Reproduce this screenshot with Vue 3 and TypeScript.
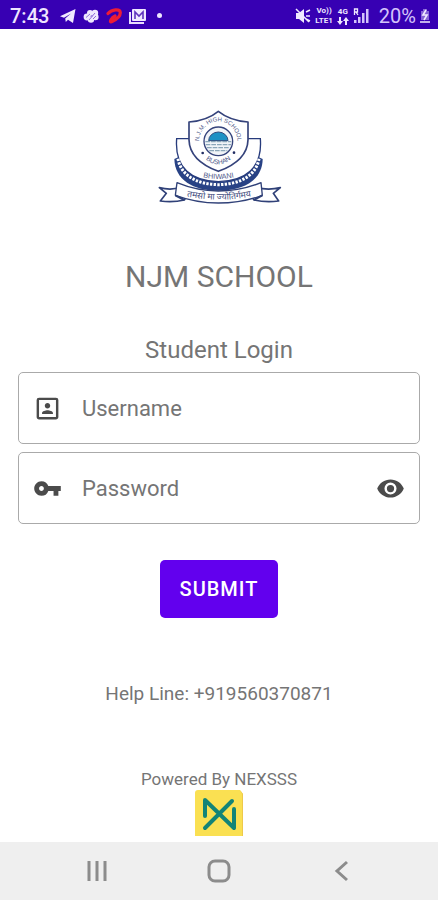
<script setup lang="ts">
import { ref } from 'vue'

const username = ref('')
const password = ref('')
const passwordVisible = ref(false)
</script>

<template>
  <div class="screen">
    <header class="status">
      <div class="status-left">
        <time class="clock">7:43</time>
        <svg class="glyph" viewBox="0 0 16 16" aria-hidden="true"><path fill="#f1eaff" d="M0 8.2 15.5 1 13 15 8 11.7 5.8 14 5.2 10.6 11 5.4 4 9.8z" /></svg>
        <svg class="glyph" viewBox="0 0 16 16" aria-hidden="true">
          <g fill="#efe7ff"><circle cx="4" cy="9" r="3.4" /><circle cx="7" cy="5" r="3" /><circle cx="12" cy="5" r="3.2" /><circle cx="12.4" cy="9" r="3.2" /><circle cx="8" cy="11.5" r="3.2" /></g>
          <path d="M3 9.500 7 6M6 12l6-7M10 11l3-3" stroke="#8f6cdb" fill="none" />
        </svg>
        <svg class="glyph" viewBox="0 0 16 16" aria-hidden="true"><path fill="none" stroke="#ee1c35" stroke-width="3.2" stroke-linecap="round" d="M2 5.500C6 1 14 .5 14.300 4.500C14.500 9 8.500 12.500 5.500 13.800C3 14.500 5.500 9.500 9 8" /></svg>
        <svg class="glyph wide" viewBox="0 0 18 16" aria-hidden="true"><path d="M1 4v11h14" stroke="#e7dcff" stroke-width="2" fill="none" /><rect x="3" y="1" width="14" height="12" rx="1" fill="#efe8ff" /><path d="M6 11V4l4 4 4-4v7" stroke="#6034bd" stroke-width="1.6" fill="none" /></svg>
        <span class="dot"></span>
      </div>
      <div class="status-right">
        <svg class="glyph" viewBox="0 0 16 16" aria-hidden="true"><path fill="#f1eaff" d="M1 5h3l5-4v14l-5-4H1z" /><path d="M1 1l13 13M11 4l4-2M11 8h4M11 11l4 2" stroke="#f1eaff" stroke-width="1.5" /></svg>
        <span class="stack"><span>Vo))</span><span>LTE1</span></span>
        <span class="stack"><span>4G</span><svg class="arrows" viewBox="0 0 12 8" aria-hidden="true"><path d="M3 0v5M9 8V3" stroke="#eee6ff" stroke-width="2" /><path d="M0 4h6L3 8zM6 4h6L9 0z" fill="#eee6ff" /></svg></span>
        <svg class="glyph" viewBox="0 0 16 16" aria-hidden="true"><path d="M1.500 7V1h3v3h-3M3 4l2 3" stroke="#f1eaff" stroke-width="1.3" fill="none" /><g fill="#d4c3fb"><rect x="1" y="12" width="2.5" height="3" /><rect x="5" y="9" width="2.5" height="6" /><rect x="9" y="5" width="2.5" height="10" /><rect x="13" y="1" width="2.5" height="14" /></g></svg>
        <span class="battery">20%</span>
        <svg class="charge" viewBox="0 0 10 16" aria-hidden="true"><path d="M3 1h4v2h2v9H1V3h2z" fill="#8563d6" /><path d="M6 2 3 7h4l-3 5M0 14h10" stroke="#f1eaff" stroke-width="1.6" fill="none" /></svg>
      </div>
    </header>

    <main class="content">
      <svg class="crest" viewBox="0 0 420 330" role="img" aria-label="NJM School crest">
        <defs>
          <path id="arc-top" d="M153 146A58 62 0 1 1 263 146" />
          <path id="arc-low" d="M159 168Q208 218 257 168" />
          <path id="arc-base" d="M140 226Q208 248 277 226" />
          <path id="arc-motto" d="M90 284Q210 314 330 284" />
        </defs>
        <path d="M76 177C78 240 132 272 208 272C286 272 340 240 341 177L326 170H91Z" fill="#284285" />
        <path d="M120 116H83C76 205 128 242 208 245C289 242 341 205 334 116H297" fill="#fff" stroke="#273b7c" stroke-width="4" />
        <path d="M87 176C95 226 143 253 208 254C274 253 322 226 330 176" fill="none" stroke="#fff" stroke-width="9" stroke-dasharray="7 4" />
        <path d="M208 34Q174 62 120 66V119C121 165 155 194 208 214C262 194 296 165 297 119V66Q243 62 208 34Z" fill="#fff" stroke="#35437b" stroke-width="5" stroke-linejoin="round" />
        <circle cx="208" cy="124" r="43" fill="#f1f4f8" stroke="#35437b" stroke-width="4" />
        <path d="M179 122A29 26 0 0 1 237 122Z" fill="#1d91c4" stroke="#304b7d" stroke-width="3" />
        <path d="M169 125h78M170 134h76M174 143h68M181 152h54" stroke="#8ba6b9" stroke-width="4" stroke-dasharray="14 3" />
        <circle cx="161" cy="159" r="4" fill="#222e63" /><circle cx="255" cy="158" r="4" fill="#222e63" />
        <g fill="#505a8a" font-family="Liberation Sans, sans-serif" text-anchor="middle">
          <text font-size="18"><textPath href="#arc-top" startOffset="50%">N.J.M. HIGH SCHOOL</textPath></text>
          <text font-size="20"><textPath href="#arc-low" startOffset="50%">BUSHAN</textPath></text>
          <text font-size="22"><textPath href="#arc-base" startOffset="50%">BHIWANI</textPath></text>
        </g>
        <path d="M95 262Q66 272 31 263L52 280 34 303Q72 308 106 300L116 282M322 262Q356 272 394 263L373 280 389 303Q350 308 315 300L304 282" fill="#fff" stroke="#304178" stroke-width="5" stroke-linejoin="round" />
        <path d="M84 248 79 286Q142 309 208 309Q278 309 340 286L336 248Q274 273 208 273Q144 273 84 248Z" fill="#fff" stroke="#304178" stroke-width="4" stroke-linejoin="round" />
        <path d="M79 286 106 300M340 286 315 300" stroke="#304178" stroke-width="6" />
        <text fill="#414b7c" font-size="26" font-family="Noto Sans Devanagari, Noto Sans, sans-serif" text-anchor="middle"><textPath href="#arc-motto" startOffset="50%">तमसो मा ज्योतिर्गमय</textPath></text>
      </svg>

      <h1 class="school">NJM SCHOOL</h1>

      <form class="login" @submit.prevent>
        <h2 class="heading">Student Login</h2>
        <label class="field">
          <svg class="icon" viewBox="0 0 24 24" aria-hidden="true"><path fill="#4b4b4b" d="M19 3H5a2 2 0 0 0-2 2v14c0 1.100.9 2 2 2h14c1.100 0 2-.9 2-2V5a2 2 0 0 0-2-2zm0 16H5V5h14v14zm-7-7c1.240 0 2.250-1.010 2.250-2.250S13.240 7.500 12 7.500 9.750 8.510 9.750 9.750 10.760 12 12 12zm-4.500 4.500h9v-.75c0-1.500-3-2.250-4.500-2.250s-4.500.75-4.500 2.250v.75z" /></svg>
          <input v-model="username" type="text" placeholder="Username" aria-label="Username" autocomplete="username" />
        </label>
        <div class="field">
          <svg class="icon" viewBox="0 0 24 24" aria-hidden="true"><path fill="#4b4b4b" d="M12.650 10A5.990 5.990 0 0 0 7 6c-3.310 0-6 2.690-6 6s2.690 6 6 6a5.990 5.990 0 0 0 5.650-4H17v4h4v-4h2v-4H12.650zM7 14c-1.100 0-2-.9-2-2s.9-2 2-2 2 .9 2 2-.9 2-2 2z" /></svg>
          <input v-model="password" :type="passwordVisible ? 'text' : 'password'" placeholder="Password" aria-label="Password" autocomplete="current-password" />
          <button class="reveal" type="button" aria-label="Show password" :aria-pressed="passwordVisible" @click="passwordVisible = !passwordVisible">
            <svg class="icon" viewBox="0 0 24 24" aria-hidden="true"><path fill="#4b4b4b" d="M12 4.500C7 4.500 2.730 7.610 1 12c1.730 4.390 6 7.500 11 7.500s9.270-3.110 11-7.500c-1.730-4.390-6-7.500-11-7.500zM12 17a5 5 0 1 1 0-10 5 5 0 0 1 0 10zm0-8a3 3 0 1 0 0 6 3 3 0 0 0 0-6z" /></svg>
          </button>
        </div>
        <button class="submit" type="submit">SUBMIT</button>
      </form>

      <p class="help">Help Line: +919560370871</p>

      <div class="powered">
        <p>Powered By NEXSSS</p>
        <svg class="brand" viewBox="0 0 48 46" role="img" aria-label="NEXSSS">
          <path d="M3 0h42l3 4v42H0V3q0-3 3-3z" fill="#fae052" />
          <path d="M45 0l3 4v42h-1V4z" fill="#eec94a" />
          <path d="M10 26V10L39 38V19M10 38 37 11" fill="none" stroke="#128477" stroke-width="4" stroke-linecap="round" stroke-linejoin="round" />
        </svg>
      </div>
    </main>

    <nav class="navbar" aria-label="System">
      <button type="button" aria-label="Recent apps"><svg viewBox="0 0 24 24"><path d="M5 2v20M13 2v20M21 2v20" /></svg></button>
      <button type="button" aria-label="Home"><svg viewBox="0 0 24 24"><rect x="2" y="2" width="20" height="20" rx="6" /></svg></button>
      <button type="button" aria-label="Back"><svg viewBox="0 0 24 24"><path d="M17 3 7 12l10 9" /></svg></button>
    </nav>
  </div>
</template>

<style>
body {
  margin: 0;
  background: #fff;
}
</style>

<style scoped>
.screen {
  display: flex;
  flex-direction: column;
  min-height: 100vh;
  font-family: Roboto, "Liberation Sans", sans-serif;
  color: #757575;
}

.screen * {
  box-sizing: border-box;
}

.status {
  display: flex;
  justify-content: space-between;
  align-items: center;
  height: 29px;
  padding: 2px 8px 0 10px;
  background: #3700b3;
  color: #eee6ff;
}

.status-left,
.status-right {
  display: flex;
  align-items: center;
}

.status-left {
  gap: 7px;
}

.status-right {
  gap: 4px;
}

.clock {
  margin-right: 4px;
  font-size: 20px;
  line-height: 24px;
  font-weight: 500;
}

.glyph {
  width: 16px;
  height: 16px;
}

.wide {
  width: 18px;
}

.dot {
  width: 5px;
  height: 5px;
  margin-left: 3px;
  border-radius: 50%;
  background: #eee6ff;
}

.stack {
  display: flex;
  flex-direction: column;
  align-items: center;
  font-size: 8px;
  line-height: 10px;
  font-weight: 700;
}

.arrows {
  width: 12px;
  height: 8px;
}

.battery {
  margin-left: 6px;
  font-size: 20px;
  line-height: 24px;
  color: #d4c3fb;
}

.charge {
  width: 10px;
  height: 16px;
}

.content {
  display: flex;
  flex: 1;
  flex-direction: column;
  align-items: center;
  padding: 71px 18px 6px;
}

.crest {
  width: 140px;
  height: 110px;
}

h1,
h2,
p {
  margin: 0;
  font-weight: 400;
}

.school {
  margin-top: 47px;
  font-size: 30px;
  line-height: 40px;
}

.login {
  display: flex;
  flex-direction: column;
  align-items: center;
  gap: 8px;
  width: 100%;
  margin-top: 39px;
}

.heading {
  font-size: 24px;
  line-height: 28px;
}

.field {
  display: flex;
  align-items: center;
  width: 100%;
  height: 72px;
  padding: 0 14px;
  border: 1px solid #aaa;
  border-radius: 5px;
}

.icon {
  display: block;
  flex: none;
  width: 29px;
  height: 29px;
}

input {
  flex: 1;
  min-width: 0;
  height: 100%;
  margin-left: 20px;
  padding: 0;
  border: 0;
  outline: 0;
  background: transparent;
  font: 400 22px/30px Roboto, "Liberation Sans", sans-serif;
  color: #444;
}

input::placeholder {
  color: #757575;
  opacity: 1;
}

button {
  border: 0;
  padding: 0;
  background: transparent;
  cursor: pointer;
}

.submit {
  height: 58px;
  margin-top: 28px;
  padding: 0 20px;
  border-radius: 5px;
  background: #6200ee;
  color: #fff;
  font: 500 20px/24px Roboto, "Liberation Sans", sans-serif;
  letter-spacing: 1px;
}

.help {
  margin-top: 63px;
  font-size: 19px;
  line-height: 26px;
}

.powered {
  display: flex;
  flex-direction: column;
  align-items: center;
  margin-top: auto;
  font-size: 17px;
  line-height: 22px;
}

.brand {
  width: 48px;
  height: 46px;
}

.navbar {
  display: flex;
  justify-content: center;
  gap: 99px;
  height: 58px;
  background: #efefef;
}

.navbar svg {
  display: block;
  width: 24px;
  height: 24px;
  fill: none;
  stroke: #8c8c8c;
  stroke-width: 3;
}
</style>
